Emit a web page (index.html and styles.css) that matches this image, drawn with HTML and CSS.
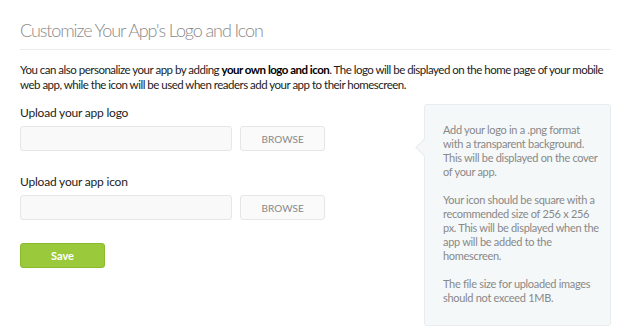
FILE: index.html
```html
<!DOCTYPE html>
<html lang="en">
<head>
    <meta charset="UTF-8">
    <meta name="viewport" content="width=device-width, initial-scale=1.0">
    <title>Customize Your App's Logo and Icon</title>
    <link rel="stylesheet" href="styles.css">
</head>
<body>

    <div class="page">
        <h2 class="title">Customize Your App's Logo and Icon</h2>

        <p class="intro">You can also personalize your app by adding <b>your own logo and icon</b>. The logo will be displayed on the home page of your mobile web app, while the icon will be used when readers add your app to their homescreen.</p>

        <div class="columns">
            <form class="upload-form">
                <label>Upload your app logo</label>
                <div class="file-row">
                    <input type="text" class="file-name">
                    <button type="button" class="browse">BROWSE</button>
                </div>

                <label>Upload your app icon</label>
                <div class="file-row">
                    <input type="text" class="file-name">
                    <button type="button" class="browse">BROWSE</button>
                </div>

                <button type="button" class="save">Save</button>
            </form>

            <div class="help-box">
                <p>Add your logo in a .png format with a transparent background. This will be displayed on the cover of your app.</p>
                <p>Your icon should be square with a recommended size of 256 x 256 px. This will be displayed when the app will be added to the homescreen.</p>
                <p>The file size for uploaded images should not exceed 1MB.</p>
            </div>
        </div>
    </div>

</body>
</html>
```

FILE: styles.css
```css
body { margin: 0; font-family: Lato, "Open Sans", Arial, sans-serif; background: #fff; color: #222; }
.page { padding: 19px 19px 0 20px; }
.title { margin: 0; padding-bottom: 8px; font-family: Lato, sans-serif; font-weight: 300; font-size: 18px; line-height: 22px; color: #8a8a8a; letter-spacing: -1.1px; border-bottom: 1px solid #ececec; }
.intro { margin: 12px 0 0; font-size: 11.5px; line-height: 15px; letter-spacing: -0.5px; color: #222; }
.intro b { font-weight: 700; color: #000; }
.columns { display: flex; justify-content: space-between; }
.upload-form { width: 305px; padding-top: 13px; }
label { display: block; font-size: 12px; line-height: 15px; letter-spacing: -0.2px; color: #222; }
.file-row { display: flex; gap: 8px; margin: 6px 0 23px; }
.file-name { width: 213px; height: 25px; box-sizing: border-box; border: 1px solid #e6e6e6; border-radius: 3px; background: #f9f9f9; }
.browse { width: 85px; height: 25px; border: 1px solid #e6e6e6; border-radius: 3px; background: #fafafa; color: #888; font-family: Lato, Arial, sans-serif; font-size: 10px; }
.save { display: block; width: 85px; height: 25px; border: 1px solid #8bbb2c; border-radius: 3px; background: #9aca3c; color: #fff; font-family: Lato, Arial, sans-serif; font-size: 11px; font-weight: 700; }
.help-box { position: relative; width: 187px; box-sizing: border-box; margin-top: 12px; padding: 18px 8px 20px 18px; background: #f5f8f9; border: 1px solid #e8ecee; border-radius: 3px; font-size: 11px; line-height: 14px; letter-spacing: -0.3px; color: #888; }
.help-box p { margin: 0 0 14px; }
.help-box p:last-child { margin-bottom: 0; }
.help-box::before { content: ""; position: absolute; left: -7px; top: 36px; width: 12px; height: 12px; background: #f5f8f9; border-left: 1px solid #e8ecee; border-bottom: 1px solid #e8ecee; transform: rotate(45deg); }
```
